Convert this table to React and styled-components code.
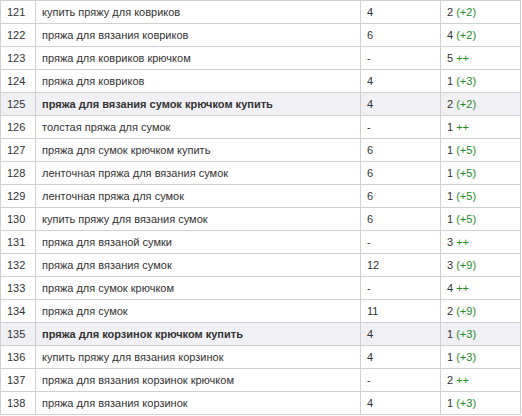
import React from "react";
import styled, { createGlobalStyle } from "styled-components";

const Global = createGlobalStyle`
  body {
    margin: 0;
    background: #fff;
    font-family: "Liberation Sans", Arial, sans-serif;
  }
`;

const Table = styled.table`
  border-collapse: collapse;
  width: 521px;
  table-layout: fixed;
  font-size: 11px;
  color: #333;
`;

const Tr = styled.tr`
  background: ${(p) => (p.$hl ? "#f0f0f5" : "#fff")};
`;

const Td = styled.td`
  border: 1px solid #d0d0d0;
  height: 21px;
  padding: 1px 6px 0;
  line-height: 13px;
  white-space: nowrap;
  font-weight: ${(p) => (p.$bold ? "bold" : "normal")};
`;

const Delta = styled.span`
  color: #1e8c1e;
`;

const rows = [
  [121, "купить пряжу для ковриков", "4", "2", "(+2)"],
  [122, "пряжа для вязания ковриков", "6", "4", "(+2)"],
  [123, "пряжа для ковриков крючком", "-", "5", "++"],
  [124, "пряжа для ковриков", "4", "1", "(+3)"],
  [125, "пряжа для вязания сумок крючком купить", "4", "2", "(+2)", true],
  [126, "толстая пряжа для сумок", "-", "1", "++"],
  [127, "пряжа для сумок крючком купить", "6", "1", "(+5)"],
  [128, "ленточная пряжа для вязания сумок", "6", "1", "(+5)"],
  [129, "ленточная пряжа для сумок", "6", "1", "(+5)"],
  [130, "купить пряжу для вязания сумок", "6", "1", "(+5)"],
  [131, "пряжа для вязаной сумки", "-", "3", "++"],
  [132, "пряжа для вязания сумок", "12", "3", "(+9)"],
  [133, "пряжа для сумок крючком", "-", "4", "++"],
  [134, "пряжа для сумок", "11", "2", "(+9)"],
  [135, "пряжа для корзинок крючком купить", "4", "1", "(+3)", true],
  [136, "купить пряжу для вязания корзинок", "4", "1", "(+3)"],
  [137, "пряжа для вязания корзинок крючком", "-", "2", "++"],
  [138, "пряжа для вязания корзинок", "4", "1", "(+3)"],
];

export default function App() {
  return (
    <>
      <Global />
      <Table>
        <colgroup>
          <col style={{ width: 35 }} />
          <col style={{ width: 325 }} />
          <col style={{ width: 80 }} />
          <col />
        </colgroup>
        <tbody>
          {rows.map(([n, q, f, pos, d, hl]) => (
            <Tr key={n} $hl={hl}>
              <Td>{n}</Td>
              <Td $bold={hl}>{q}</Td>
              <Td>{f}</Td>
              <Td>
                {pos} <Delta>{d}</Delta>
              </Td>
            </Tr>
          ))}
        </tbody>
      </Table>
    </>
  );
}
